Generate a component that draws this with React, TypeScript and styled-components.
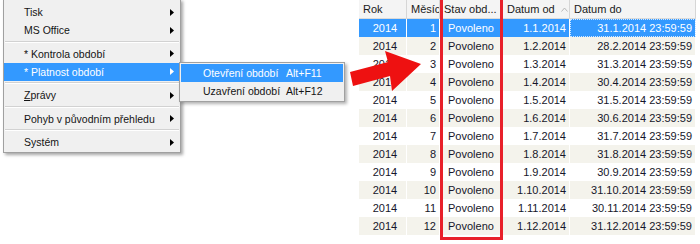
import React from "react";
import styled, { createGlobalStyle, css } from "styled-components";

const GlobalStyle = createGlobalStyle`
  html, body { margin: 0; padding: 0; background: #ffffff; }
  body { font-family: "Liberation Sans", Arial, sans-serif; }
`;

const Page = styled.div`
  position: relative;
  width: 700px;
  height: 244px;
  display: flex;
  align-items: flex-start;
  overflow: hidden;
  background: #fff;
`;

const MenuColumn = styled.div`
  flex: none;
  padding-left: 3px;
  margin-top: -1px;
`;

const Menu = styled.div`
  position: relative;
  width: 176px;
  background: #f0f0f0;
  border: 1px solid #a0a0a0;
  box-shadow: 2px 2px 3px rgba(0, 0, 0, 0.35);
  padding: 3px 0 1px;
  font-size: 10.5px;
  color: #141414;
`;

const Item = styled.div<{ $active?: boolean }>`
  position: relative;
  height: 18px;
  display: flex;
  align-items: center;
  padding: 0 6px 0 20px;
  ${(p) =>
    p.$active &&
    css`
      background: #3399ff;
      color: #fff;
    `}
`;

const Label = styled.span`
  flex: 1;
  white-space: nowrap;
`;

const Under = styled.span`
  text-decoration: underline;
`;

const Sep = styled.div`
  height: 5.5px;
  display: flex;
  align-items: center;
  padding: 0 1px;
  &::before {
    content: "";
    flex: 1;
    border-top: 1px solid #d2d2d2;
    border-bottom: 1px solid #ffffff;
  }
`;

const Caret = ({ color }: { color: string }) => (
  <svg width="4" height="7" viewBox="0 0 4 7">
    <polygon points="0,0 4,3.5 0,7" fill={color} />
  </svg>
);

const SubMenu = styled.div`
  position: absolute;
  left: 175px;
  top: -1px;
  width: 162px;
  background: #f0f0f0;
  border: 1px solid #a0a0a0;
  box-shadow: 2px 2px 3px rgba(0, 0, 0, 0.3);
  padding: 1px 1px;
  color: #141414;
  z-index: 2;
`;

const SubItem = styled.div<{ $active?: boolean }>`
  height: 18px;
  display: flex;
  align-items: center;
  padding-left: 22px;
  white-space: nowrap;
  ${(p) =>
    p.$active &&
    css`
      background: #3399ff;
      color: #fff;
    `}
`;

const SubLabel = styled.span`
  width: 83px;
`;

const TableArea = styled.div`
  position: relative;
  margin-left: auto;
  margin-right: 4px;
  width: 337px;
  font-size: 11px;
  color: #16162a;
`;

const cols = "48px 33px 63px 67px 126px";

const HeaderRow = styled.div`
  display: grid;
  grid-template-columns: ${cols};
  height: 19px;
  background: #f4f4f4;
  border-bottom: 1px solid #dadada;
  box-sizing: border-box;
`;

const HeaderCell = styled.div`
  display: flex;
  align-items: center;
  padding-left: 4px;
  border-right: 1px solid #d6d6d6;
  white-space: nowrap;
  overflow: hidden;
  gap: 6px;
  color: #1a1a1a;
`;

const Row = styled.div<{ $alt?: boolean; $selected?: boolean }>`
  display: grid;
  grid-template-columns: ${cols};
  height: 18px;
  background: ${(p) => (p.$selected ? "#3399ff" : p.$alt ? "#f4f3ec" : "#ffffff")};
  color: ${(p) => (p.$selected ? "#ffffff" : "#16162a")};
`;

const Cell = styled.div<{ $align?: "left" | "right" | "center"; $focus?: boolean }>`
  display: flex;
  align-items: center;
  justify-content: ${(p) =>
    p.$align === "right" ? "flex-end" : p.$align === "center" ? "center" : "flex-start"};
  padding: 0 3px 0 8px;
  border-right: 1px solid #ffffff;
  white-space: nowrap;
  box-sizing: border-box;
  ${(p) =>
    p.$focus &&
    css`
      outline: 1px dotted #cfe6ff;
      outline-offset: -1px;
    `}
`;

const RedBox = styled.div`
  position: absolute;
  left: 81px;
  top: -4px;
  width: 63px;
  height: 244px;
  border: 3px solid #e8202a;
  box-sizing: border-box;
  pointer-events: none;
`;

const ArrowSvg = styled.svg`
  position: absolute;
  left: 340px;
  top: 45px;
`;

const months = [31, 28, 31, 30, 31, 30, 31, 31, 30, 31, 30, 31];

export default function App() {
  return (
    <Page>
      <GlobalStyle />
      <MenuColumn>
        <Menu>
          <Item>
            <Label>Tisk</Label>
            <Caret color="#000" />
          </Item>
          <Item>
            <Label>MS Office</Label>
            <Caret color="#000" />
          </Item>
          <Sep />
          <Item>
            <Label>* Kontrola období</Label>
            <Caret color="#000" />
          </Item>
          <Item $active>
            <Label>* Platnost období</Label>
            <Caret color="#fff" />
            <SubMenu>
              <SubItem $active>
                <SubLabel>Otevření období</SubLabel>
                <span>Alt+F11</span>
              </SubItem>
              <SubItem>
                <SubLabel>Uzavření období</SubLabel>
                <span>Alt+F12</span>
              </SubItem>
            </SubMenu>
          </Item>
          <Sep />
          <Item>
            <Label>
              <Under>Z</Under>právy
            </Label>
            <Caret color="#000" />
          </Item>
          <Sep />
          <Item>
            <Label>Pohyb v původním přehledu</Label>
            <Caret color="#000" />
          </Item>
          <Sep />
          <Item>
            <Label>Systém</Label>
            <Caret color="#000" />
          </Item>
        </Menu>
      </MenuColumn>

      <TableArea>
        <HeaderRow>
          <HeaderCell>Rok</HeaderCell>
          <HeaderCell>Měsíc</HeaderCell>
          <HeaderCell>Stav obd...</HeaderCell>
          <HeaderCell>
            Datum od
            <svg width="7" height="5" viewBox="0 0 7 5">
              <polyline points="0.5,4.5 3.5,1 6.5,4.5" fill="none" stroke="#b8b8b8" strokeWidth="1" />
            </svg>
          </HeaderCell>
          <HeaderCell>Datum do</HeaderCell>
        </HeaderRow>
        {months.map((days, i) => {
          const m = i + 1;
          const selected = i === 0;
          return (
            <Row key={m} $alt={i % 2 === 1} $selected={selected}>
              <Cell $align="center">2014</Cell>
              <Cell $align="right">{m}</Cell>
              <Cell>Povoleno</Cell>
              <Cell $align="right">{`1.${m}.2014`}</Cell>
              <Cell $align="right" $focus={selected}>{`${days}.${m}.2014 23:59:59`}</Cell>
            </Row>
          );
        })}
        <RedBox />
      </TableArea>

      <ArrowSvg width="90" height="60" viewBox="0 0 90 60">
        <polygon
          points="81,19 45,6 48,17 10,27 13,41 50,31 52,46"
          fill="#ee1111"
        />
      </ArrowSvg>
    </Page>
  );
}
